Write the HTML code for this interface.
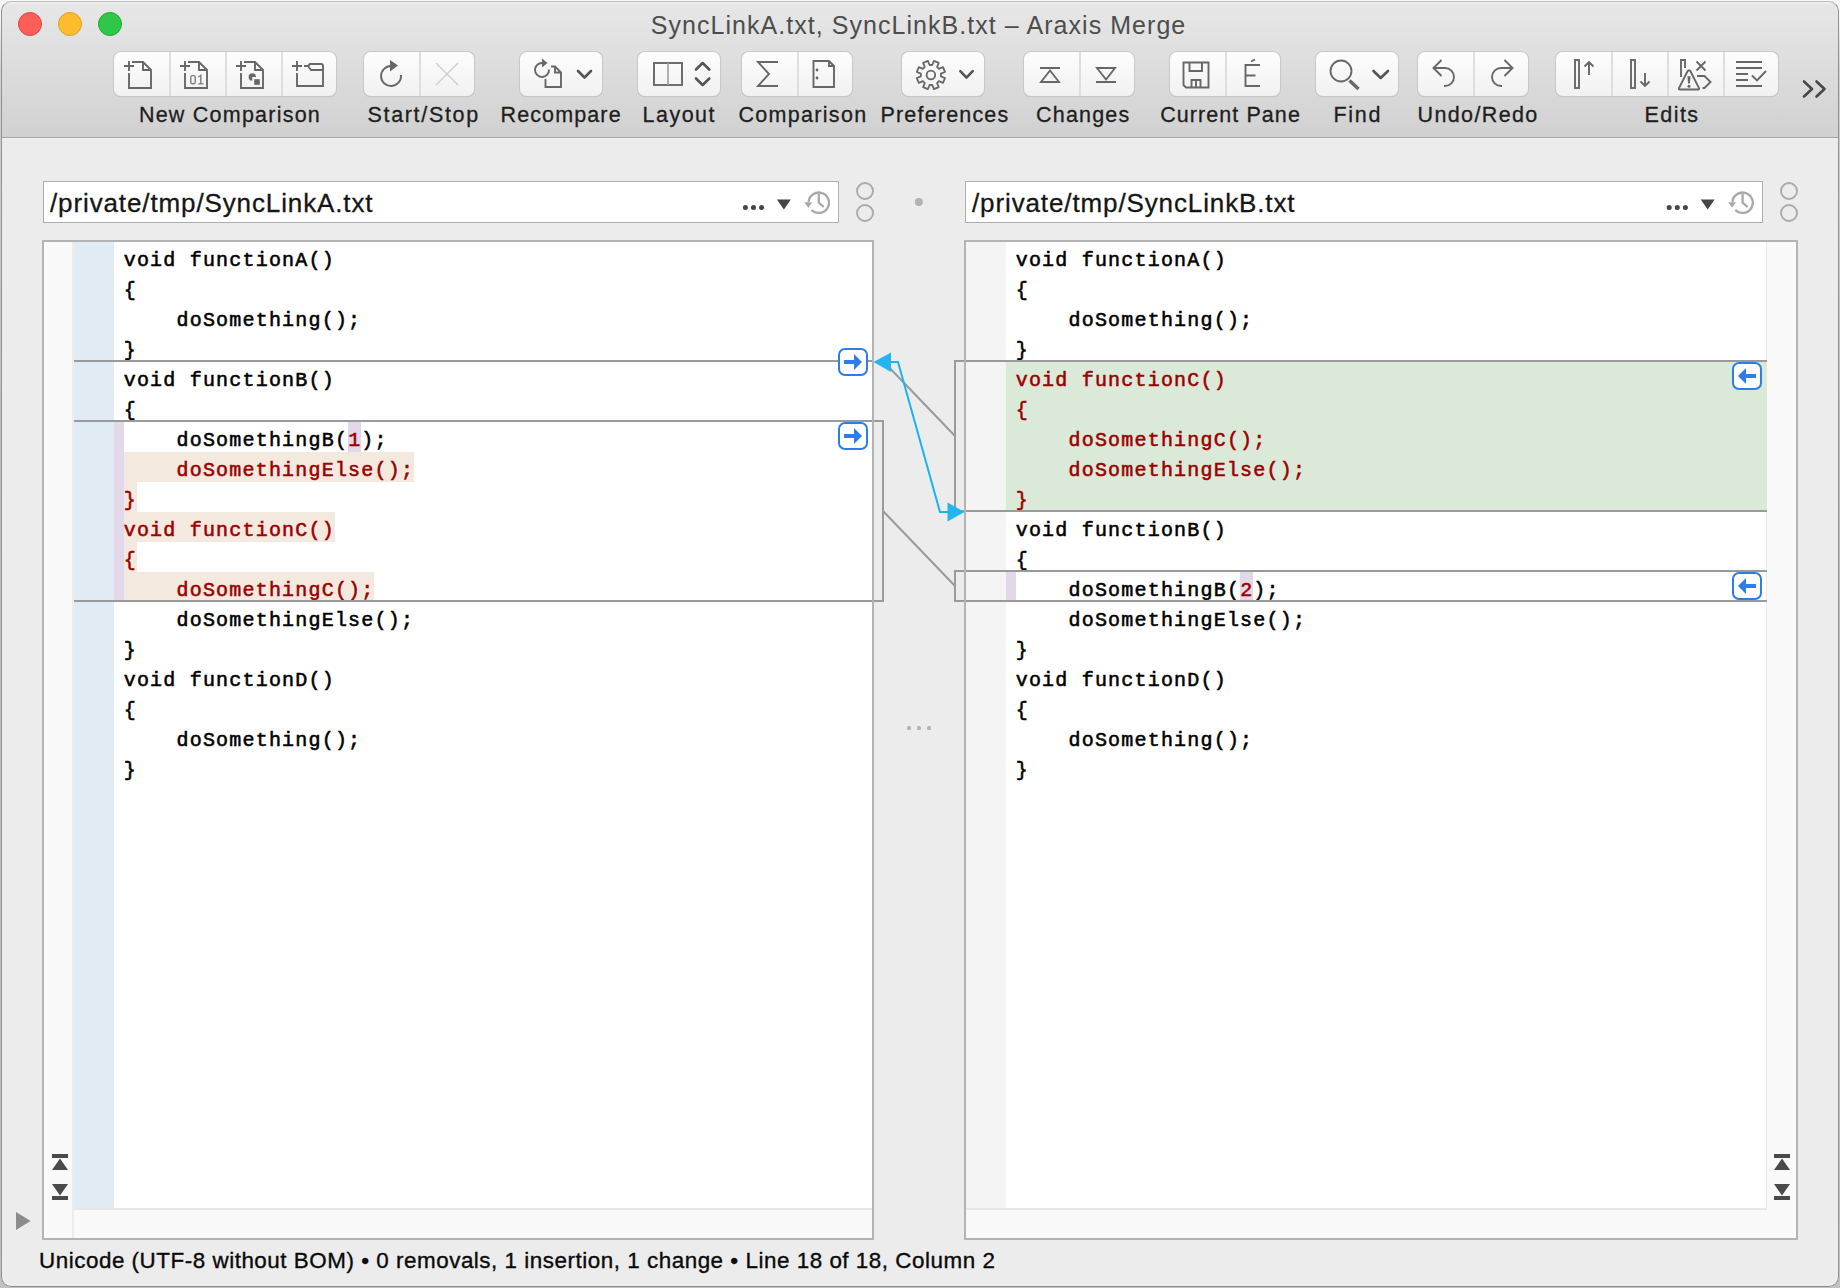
<!DOCTYPE html>
<html><head><meta charset="utf-8">
<style>
*{margin:0;padding:0;box-sizing:border-box}
html,body{width:1840px;height:1288px;overflow:hidden;background:linear-gradient(#fafafa 0px,#f4f4f4 20px,#d0d0d0 70px,#bdbdbd 500px,#c2c2c2 1288px);font-family:"Liberation Sans",sans-serif}
div,svg{position:absolute}
#clip{left:0;top:0;width:1840px;height:1288px;clip-path:inset(1px round 10px);background:#ececec}
#frame{left:1px;top:1px;width:1838px;height:1286px;border-radius:10px;border:1px solid;border-color:#bdbdbd #929292 #8e8e8e #929292}
#tb{left:0;top:0;width:1840px;height:139px;background:linear-gradient(#f1f1f1 0px,#f1f1f1 3px,#e7e7e7 4px,#d1d1d1 137px,#a4a4a4 137px,#a4a4a4 138px,#f2f2f2 138px)}
.title{left:-1.5px;top:10px;width:1840px;text-align:center;font-size:25px;letter-spacing:1.05px;color:#4d4d4d;line-height:30px;white-space:nowrap}
.light{top:12px;width:24px;height:24px;border-radius:50%}
.grp{top:52px;height:44px;border-radius:7px;background:linear-gradient(#fdfdfd,#f1f1f1);box-shadow:0 0 0 1px #c8c8c8,0 1px 1px 0 #aaa}
.dv{top:0;width:2px;height:44px;background:#dedede}
.lbl{top:102px;font-size:21.5px;color:#1e1e1e;-webkit-text-stroke:0.3px #1e1e1e;line-height:26px;white-space:nowrap;text-align:center}
.pathbox{top:181px;height:42px;background:#fff;border:1px solid #adadad}
.ptxt{left:6px;top:6px;font-size:26px;letter-spacing:0.88px;color:#151515;-webkit-text-stroke:0.3px #151515;line-height:30px;white-space:nowrap}
.pane{top:240px;height:1000px;background:#fff;border:2px solid #b3b3b3}
.code{font-family:"Liberation Mono",monospace;font-weight:normal;font-size:20px;letter-spacing:1.2px;line-height:30px;white-space:pre;color:#000;-webkit-text-stroke:0.55px}
.r{color:#9c0000}
.status{left:39px;top:1248px;font-size:22.4px;letter-spacing:0.53px;color:#0a0a0a;-webkit-text-stroke:0.35px #0a0a0a;line-height:26px;white-space:nowrap}
</style></head><body>
<div id="clip">

<div id="tb">
<div class="title">SyncLinkA.txt, SyncLinkB.txt – Araxis Merge</div>
<div class="light" style="left:18px;background:#fc5f57;border:1px solid #e0443e"></div>
<div class="light" style="left:58px;background:#fdbc2e;border:1px solid #dea123"></div>
<div class="light" style="left:98px;background:#30c748;border:1px solid #1aab29"></div>
<div class="grp" style="left:113.5px;width:222.5px"><div class="dv" style="left:55px"></div><div class="dv" style="left:111px"></div><div class="dv" style="left:167px"></div></div>
<div class="grp" style="left:364px;width:110px"><div class="dv" style="left:55px"></div></div>
<div class="grp" style="left:519.5px;width:82px"></div>
<div class="grp" style="left:637.5px;width:82px"></div>
<div class="grp" style="left:741.5px;width:110.5px"><div class="dv" style="left:55px"></div></div>
<div class="grp" style="left:902px;width:82px"></div>
<div class="grp" style="left:1023.5px;width:110px"><div class="dv" style="left:55px"></div></div>
<div class="grp" style="left:1170px;width:110px"><div class="dv" style="left:55px"></div></div>
<div class="grp" style="left:1316px;width:81.5px"></div>
<div class="grp" style="left:1417.5px;width:110.5px"><div class="dv" style="left:55px"></div></div>
<div class="grp" style="left:1555.5px;width:222px"><div class="dv" style="left:55px"></div><div class="dv" style="left:111px"></div><div class="dv" style="left:167px"></div></div>
<div class="lbl" style="left:138.9px;letter-spacing:1.23px">New Comparison</div>
<div class="lbl" style="left:367.5px;letter-spacing:1.67px">Start/Stop</div>
<div class="lbl" style="left:500.5px;letter-spacing:1.12px">Recompare</div>
<div class="lbl" style="left:642.5px;letter-spacing:1.50px">Layout</div>
<div class="lbl" style="left:738.5px;letter-spacing:1.30px">Comparison</div>
<div class="lbl" style="left:880.5px;letter-spacing:1.18px">Preferences</div>
<div class="lbl" style="left:1036.1px;letter-spacing:1.17px">Changes</div>
<div class="lbl" style="left:1160.2px;letter-spacing:1.07px">Current Pane</div>
<div class="lbl" style="left:1333.5px;letter-spacing:1.67px">Find</div>
<div class="lbl" style="left:1417.5px;letter-spacing:1.38px">Undo/Redo</div>
<div class="lbl" style="left:1644.6px;letter-spacing:1.43px">Edits</div>
<svg style="left:0;top:0" width="1840" height="138" viewBox="0 0 1840 138">
<g fill="none" stroke="#676767" stroke-width="1.9" stroke-linecap="butt">
<!-- new comparison -->
<path d="M124 66H134M129 61V71M129 73V88H151V70L143 62H132M143 62V70H151"/>
<path d="M180 66H190M185 61V71M185 73V88H207V70L199 62H188M199 62V70H207"/>
<path d="M236 66H246M241 61V71M241 73V88H263V70L255 62H244M255 62V70H263"/>
<path d="M292 66H302M297 61V71M297 73V86H323V66Q323 64 321 64H310L308 66H304M308 66L311 70H323"/>
<!-- layout -->
<rect x="654" y="63" width="28" height="22"/>
<!-- sigma -->
<path d="M778 62H758L769 74L758 86H778"/>
<path d="M813.5 61V87H834V66L829 61ZM829 61V66H834"/>
<!-- changes -->
<path d="M1040 68H1060M1050 70.5L1041 82H1059Z"/>
<path d="M1096 82H1116M1106 79.5L1097 68H1115Z"/>
<!-- floppy -->
<path d="M1183.5 62.5H1208.5V87.5H1186L1183.5 85Z"/>
<path d="M1189.5 62.5V71H1202V62.5M1191.5 87.5V80H1200.5V87.5M1196 80V87.5"/>
<!-- E acute -->
<path d="M1260 65H1245.5V86H1260M1245.5 75.5H1255.5M1251 61.5L1255 59.5"/>
<!-- find -->
<circle cx="1341" cy="71" r="10.5"/>
<!-- undo redo -->
<path d="M1441.5 60L1433.5 68L1441.5 76M1433.5 68H1445A9 9 0 0 1 1445 86H1444"/>
<path d="M1504.5 60L1512.5 68L1504.5 76M1512.5 68H1501A9 9 0 0 0 1501 86H1502"/>
<!-- edits -->
<rect x="1575" y="60" width="4" height="28"/>
<path d="M1589 75V62M1584.5 66.5L1589 62L1593.5 66.5"/>
<rect x="1631" y="60" width="4" height="28"/>
<path d="M1645 73V86M1640.5 81.5L1645 86L1649.5 81.5"/>
<path d="M1681 77V60H1685V68M1696.5 61.5L1705.5 70.5M1705.5 61.5L1696.5 70.5M1697 76H1704.5L1710.5 82L1704.5 88H1702.5"/>
<path d="M1689 70.5Q1690 70 1690.6 71.5L1699 88Q1699.5 89.5 1698 89.5H1680Q1678.5 89.5 1679 88L1687.4 71.5Q1688 70 1689 70.5Z"/>
<path d="M1736 62H1762M1736 68H1762M1736 74H1748M1736 80H1748M1736 86H1762M1752 75.5L1757 80.5L1766 71"/>
<!-- start -->
<path d="M401 75A10 10 0 1 1 391 66" />
<path d="M549 69.5A7 7 0 1 1 542.5 63"/>
<path d="M545.5 79V87H561V72.5L555 66.5H551M555 66.5V72.5H561"/>
</g>
<g fill="#676767">
<path d="M390 60L398 65.5L390 71.5Z"/>
<path d="M542 58.5L547.5 63L542 67.5Z"/>
<path d="M252.3 77H256A3.7 3.7 0 1 0 252.3 80.7Z"/><rect x="254.2" y="79.2" width="5.6" height="5.6"/>
<circle cx="817" cy="70" r="1.4"/><circle cx="817" cy="78" r="1.4"/>
<circle cx="1689" cy="86.2" r="1.5"/>
<path d="M1687.4 76.3H1690.6L1689.9 83.6H1688.1Z"/>
</g>
<g fill="none" stroke="#676767" stroke-width="3.4"><path d="M1349.5 80.5L1358.5 89"/></g>
<g fill="none" stroke="#9c9c9c" stroke-width="1.6"><path d="M668 63V85"/></g>
<g fill="none" stroke="#d0d0d0" stroke-width="1.5"><path d="M436 63L458 85M458 63L436 85"/></g>
<g fill="none" stroke="#555" stroke-width="2.6" stroke-linecap="round" stroke-linejoin="round">
<path d="M578 71L584.5 77.5L591 71"/>
<path d="M960.3 71.2L966.5 77.6L972.7 71.2"/>
<path d="M1373.5 71L1380.7 78L1388 71"/>
<path d="M696 69.5L702.6 63L709.3 69.5M696 78.5L702.6 85L709.3 78.5"/>
</g>
<g fill="none" stroke="#474747" stroke-width="2.6" stroke-linecap="round" stroke-linejoin="round">
<path d="M1804 81.5L1812 89L1804 96.5M1816.5 81.5L1824.5 89L1816.5 96.5"/>
</g>
<g fill="none" stroke="#7d7d7d" stroke-width="1.4"><rect x="190.8" y="75.6" width="4.4" height="8.2" rx="1.6"/><path d="M198.3 77L200.8 75.4V83.9M198.2 83.9H203.6"/></g>
<g fill="none" stroke="#676767" stroke-width="1.8" stroke-linejoin="round"><path d="M933.94 60.92 L938.70 62.90 L937.03 66.97 L938.93 68.87 L943.00 67.20 L944.98 71.96 L940.91 73.66 L940.91 76.34 L944.98 78.04 L943.00 82.80 L938.93 81.13 L937.03 83.03 L938.70 87.10 L933.94 89.08 L932.24 85.01 L929.56 85.01 L927.86 89.08 L923.10 87.10 L924.77 83.03 L922.87 81.13 L918.80 82.80 L916.82 78.04 L920.89 76.34 L920.89 73.66 L916.82 71.96 L918.80 67.20 L922.87 68.87 L924.77 66.97 L923.10 62.90 L927.86 60.92 L929.56 64.99 L932.24 64.99Z"/><circle cx="930.9" cy="75" r="4.3"/></g>
</svg>
</div>
<div class="pathbox" style="left:43px;width:796px"><div class="ptxt">/private/tmp/SyncLinkA.txt</div></div>
<div class="pathbox" style="left:965px;width:798px"><div class="ptxt">/private/tmp/SyncLinkB.txt</div></div>
<div class="pane" style="left:42px;width:832px"></div>
<div class="pane" style="left:964px;width:834px"></div>
<div style="left:44px;top:242px;width:28px;height:996px;background:#f9f9f9"></div>
<div style="left:72px;top:242px;width:2px;height:996px;background:#ececec"></div>
<div style="left:74px;top:242px;width:40px;height:966px;background:#e1ebf4"></div>
<div style="left:74px;top:1208px;width:798px;height:30px;background:#f9f9f9;border-top:2px solid #e8e8e8"></div>
<div style="left:966px;top:242px;width:40px;height:966px;background:#f4f4f4"></div>
<div style="left:1767px;top:242px;width:29px;height:996px;background:#f9f9f9"></div>
<div style="left:1766px;top:242px;width:1px;height:968px;background:#e9e9e9"></div>
<div style="left:966px;top:1208px;width:801px;height:30px;background:#f9f9f9;border-top:2px solid #e8e8e8"></div>
<div style="left:123.7px;top:452px;width:290.4px;height:30px;background:#f4e9df"></div>
<div style="left:123.7px;top:482px;width:13.2px;height:30px;background:#f4e9df"></div>
<div style="left:123.7px;top:512px;width:211.2px;height:30px;background:#f4e9df"></div>
<div style="left:123.7px;top:542px;width:13.2px;height:30px;background:#f4e9df"></div>
<div style="left:123.7px;top:572px;width:250.8px;height:30px;background:#f4e9df"></div>
<div style="left:348.1px;top:422px;width:13.2px;height:30px;background:#e2d8ea"></div>
<div style="left:114px;top:421px;width:10px;height:180px;background:#e2d8ea"></div>
<div style="left:1006px;top:361px;width:761px;height:150px;background:#dbe9d8"></div>
<div style="left:1240.1px;top:572px;width:13.2px;height:30px;background:#e2d8ea"></div>
<div style="left:1006px;top:571px;width:10px;height:30px;background:#e2d8ea"></div>
<div class="code" style="left:123.7px;top:246px">void functionA()
{
    doSomething();
}
void functionB()
{
    doSomethingB(<span class="r">1</span>);
<span class="r">    doSomethingElse();</span>
<span class="r">}</span>
<span class="r">void functionC()</span>
<span class="r">{</span>
<span class="r">    doSomethingC();</span>
    doSomethingElse();
}
void functionD()
{
    doSomething();
}
</div>
<div class="code" style="left:1015.7px;top:246px">void functionA()
{
    doSomething();
}
<span class="r">void functionC()</span>
<span class="r">{</span>
<span class="r">    doSomethingC();</span>
<span class="r">    doSomethingElse();</span>
<span class="r">}</span>
void functionB()
{
    doSomethingB(<span class="r">2</span>);
    doSomethingElse();
}
void functionD()
{
    doSomething();
}
</div>
<svg style="left:0;top:0" width="1840" height="1288" viewBox="0 0 1840 1288">
<g stroke="#9a9a9a" stroke-width="2" fill="none">
<path d="M74 361H873"/>
<path d="M74 421H883V601H74"/>
<path d="M1767 361H955V511H1767"/>
<path d="M1767 571H955V601H1767"/>
<path d="M883 361L955 436"/>
<path d="M883 511L955 586"/>
</g>
<g stroke="#b3b3b3" stroke-width="2"><path d="M873 242V1239M965 242V1239"/></g>
<g fill="#fff" stroke="#2b7de9" stroke-width="2">
<rect x="839" y="349" width="28" height="26" rx="6"/>
<rect x="839" y="423" width="28" height="26" rx="6"/>
<rect x="1733" y="363" width="28" height="26" rx="6"/>
<rect x="1733" y="573" width="28" height="26" rx="6"/>
</g>
<g fill="#2b7de9">
<path d="M844 360H854V354L862 362L854 370V364H844Z"/>
<path d="M844 434H854V428L862 436L854 444V438H844Z"/>
<path d="M1756 374H1746V368L1738 376L1746 384V378H1756Z"/>
<path d="M1756 584H1746V578L1738 586L1746 594V588H1756Z"/>
</g>
<g stroke="#1ab3ef" stroke-width="2" fill="none"><path d="M889 362H898L940 512H950"/></g>
<g fill="#22b6ef">
<path d="M873.5 362L891 352.5V372Z"/>
<path d="M964.5 512L947.5 502.5V521.5Z"/>
</g>
</svg>
<svg style="left:0;top:0" width="1840" height="1288" viewBox="0 0 1840 1288"><circle cx="745.4" cy="207.6" r="2.5" fill="#454545"/><circle cx="753.5" cy="207.6" r="2.5" fill="#454545"/><circle cx="761.6" cy="207.6" r="2.5" fill="#454545"/><path d="M776.9 199.5H790.8L783.9 209.5Z" fill="#454545"/><g fill="none" stroke="#a8a8a8" stroke-width="2.3"><path d="M808.6 201.8A10.2 10.2 0 1 1 811.6 210.0"/><path d="M818.8 193.8V202.8L823.8 206.8"/></g><path d="M804.3 202.3H812.3L808.3 207.8Z" fill="#a8a8a8"/><circle cx="1669.2" cy="207.6" r="2.5" fill="#454545"/><circle cx="1677.3" cy="207.6" r="2.5" fill="#454545"/><circle cx="1685.4" cy="207.6" r="2.5" fill="#454545"/><path d="M1700.7 199.5H1714.6L1707.7 209.5Z" fill="#454545"/><g fill="none" stroke="#a8a8a8" stroke-width="2.3"><path d="M1732.4 201.8A10.2 10.2 0 1 1 1735.4 210.0"/><path d="M1742.6 193.8V202.8L1747.6 206.8"/></g><path d="M1728.1 202.3H1736.1L1732.1 207.8Z" fill="#a8a8a8"/><g fill="none" stroke="#aaaaaa" stroke-width="1.9"><circle cx="865" cy="191" r="8"/><circle cx="865" cy="213" r="8"/><circle cx="1789" cy="191" r="8"/><circle cx="1789" cy="213" r="8"/></g><circle cx="918.8" cy="202" r="4" fill="#b2b2b2"/><g fill="#b5b5b5"><rect x="907" y="726" width="4" height="4" rx="1.5"/><rect x="917" y="726" width="4" height="4" rx="1.5"/><rect x="927" y="726" width="4" height="4" rx="1.5"/></g><g fill="#4a4a4a"><rect x="52" y="1154" width="16" height="4"/><path d="M52 1170L60 1158.5L68 1170Z"/><path d="M52 1184L60 1195.5L68 1184Z"/><rect x="52" y="1196" width="16" height="4"/></g><g fill="#4a4a4a"><rect x="1774" y="1154" width="16" height="4"/><path d="M1774 1170L1782 1158.5L1790 1170Z"/><path d="M1774 1184L1782 1195.5L1790 1184Z"/><rect x="1774" y="1196" width="16" height="4"/></g><path d="M16 1212V1230L30.6 1221Z" fill="#8c8c8c"/></svg>
<div class="status">Unicode (UTF-8 without BOM) • 0 removals, 1 insertion, 1 change • Line 18 of 18, Column 2</div>
</div><div id="frame"></div>
</body></html>
